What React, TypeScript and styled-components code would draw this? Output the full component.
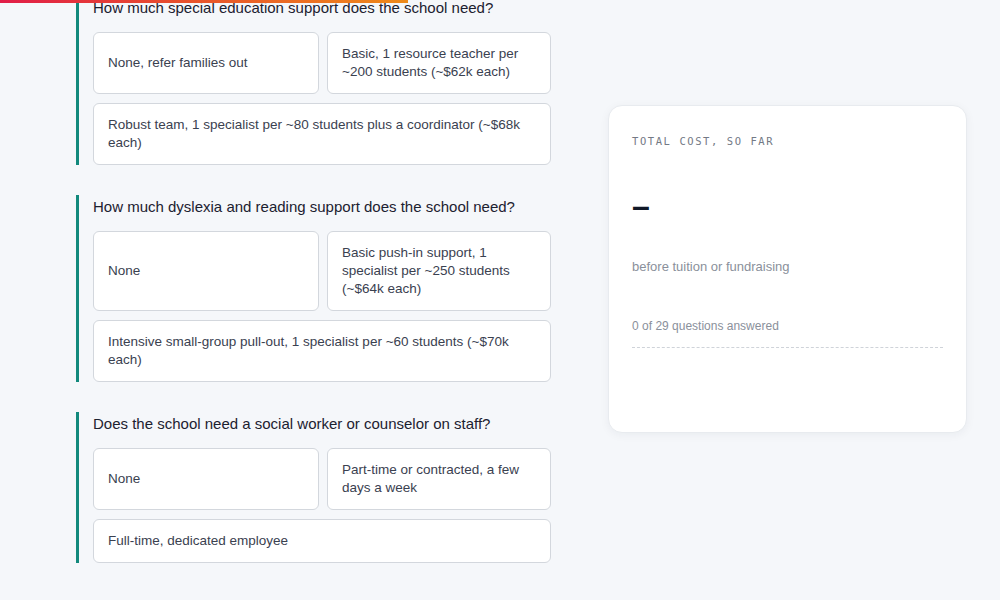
import styled, { createGlobalStyle } from 'styled-components';

const GlobalStyle = createGlobalStyle`
  html, body {
    margin: 0;
    padding: 0;
    background: #f5f7fa;
    font-family: 'Liberation Sans', Arial, sans-serif;
    color: #1f2430;
  }
  * { box-sizing: border-box; }
`;

const ProgressTrack = styled.div`
  position: fixed;
  top: 0;
  left: 0;
  right: 0;
  height: 3px;
  z-index: 10;
`;

const ProgressFill = styled.div`
  height: 100%;
  background: linear-gradient(90deg, #e11d48 0%, #e8502c 45%, #ee8a1a 100%);
`;

const Page = styled.div`
  display: grid;
  grid-template-columns: 475px 359px;
  column-gap: 57px;
  padding: 0 32px 36px 76px;
  height: 600px;
  overflow: hidden;
`;

const Questions = styled.div`
  display: flex;
  flex-direction: column;
  gap: 30px;
  margin-top: -4px;
`;

const Question = styled.section`
  border-left: 3px solid #12897c;
  padding-left: 14px;
`;

const Prompt = styled.h3`
  margin: 0 0 14px;
  padding-top: 1px;
  font-size: 15px;
  line-height: 21px;
  font-weight: 400;
  color: #1c2130;
`;

const Options = styled.div`
  display: grid;
  grid-template-columns: 226px 224px;
  gap: 9px 8px;
`;

const Option = styled.button<{ $wide?: boolean }>`
  grid-column: ${(p) => (p.$wide ? '1 / -1' : 'auto')};
  display: flex;
  align-items: center;
  text-align: left;
  padding: 12px 14px;
  background: #ffffff;
  border: 1px solid #d3d7dd;
  border-radius: 6px;
  font-family: inherit;
  font-size: 13.5px;
  line-height: 18px;
  color: #3a4150;
  cursor: pointer;
`;

const Summary = styled.aside`
  align-self: start;
  margin-top: 105px;
  height: 328px;
  background: #ffffff;
  border: 1px solid #e8ebef;
  border-radius: 14px;
  box-shadow: 0 2px 10px rgba(20, 30, 50, 0.05);
  padding: 28px 23px 0;
`;

const Label = styled.div`
  font-family: 'DejaVu Sans Mono', 'Liberation Mono', monospace;
  font-size: 10.5px;
  letter-spacing: 0.15em;
  color: #737985;
  line-height: 14px;
`;

const Total = styled.div`
  margin-top: 39px;
  font-size: 32px;
  line-height: 38px;
  font-weight: 700;
  color: #111827;
`;

const Note = styled.div<{ $size: number }>`
  font-size: ${(p) => p.$size}px;
  line-height: 18px;
  color: #8a909b;
`;

const Caption = styled(Note)`
  margin-top: 33px;
`;

const Answered = styled(Note)`
  margin-top: 41px;
  padding-bottom: 12px;
  border-bottom: 1px dashed #cfd3d9;
`;

type Q = { prompt: string; options: string[] };

const questions: Q[] = [
  {
    prompt: 'How much special education support does the school need?',
    options: [
      'None, refer families out',
      'Basic, 1 resource teacher per ~200 students (~$62k each)',
      'Robust team, 1 specialist per ~80 students plus a coordinator (~$68k each)',
    ],
  },
  {
    prompt: 'How much dyslexia and reading support does the school need?',
    options: [
      'None',
      'Basic push-in support, 1 specialist per ~250 students (~$64k each)',
      'Intensive small-group pull-out, 1 specialist per ~60 students (~$70k each)',
    ],
  },
  {
    prompt: 'Does the school need a social worker or counselor on staff?',
    options: ['None', 'Part-time or contracted, a few days a week', 'Full-time, dedicated employee'],
  },
];

export default function App() {
  const answered = 0;
  const total = 29;
  return (
    <>
      <GlobalStyle />
      <ProgressTrack>
        <ProgressFill style={{ width: '40.8%' }} />
      </ProgressTrack>
      <Page>
        <Questions>
          {questions.map((q) => (
            <Question key={q.prompt}>
              <Prompt>{q.prompt}</Prompt>
              <Options>
                {q.options.map((o, i) => (
                  <Option key={o} $wide={i === 2}>
                    {o}
                  </Option>
                ))}
              </Options>
            </Question>
          ))}
        </Questions>
        <Summary>
          <Label>TOTAL COST, SO FAR</Label>
          <Total>–</Total>
          <Caption $size={13}>before tuition or fundraising</Caption>
          <Answered $size={12}>
            {answered} of {total} questions answered
          </Answered>
        </Summary>
      </Page>
    </>
  );
}
